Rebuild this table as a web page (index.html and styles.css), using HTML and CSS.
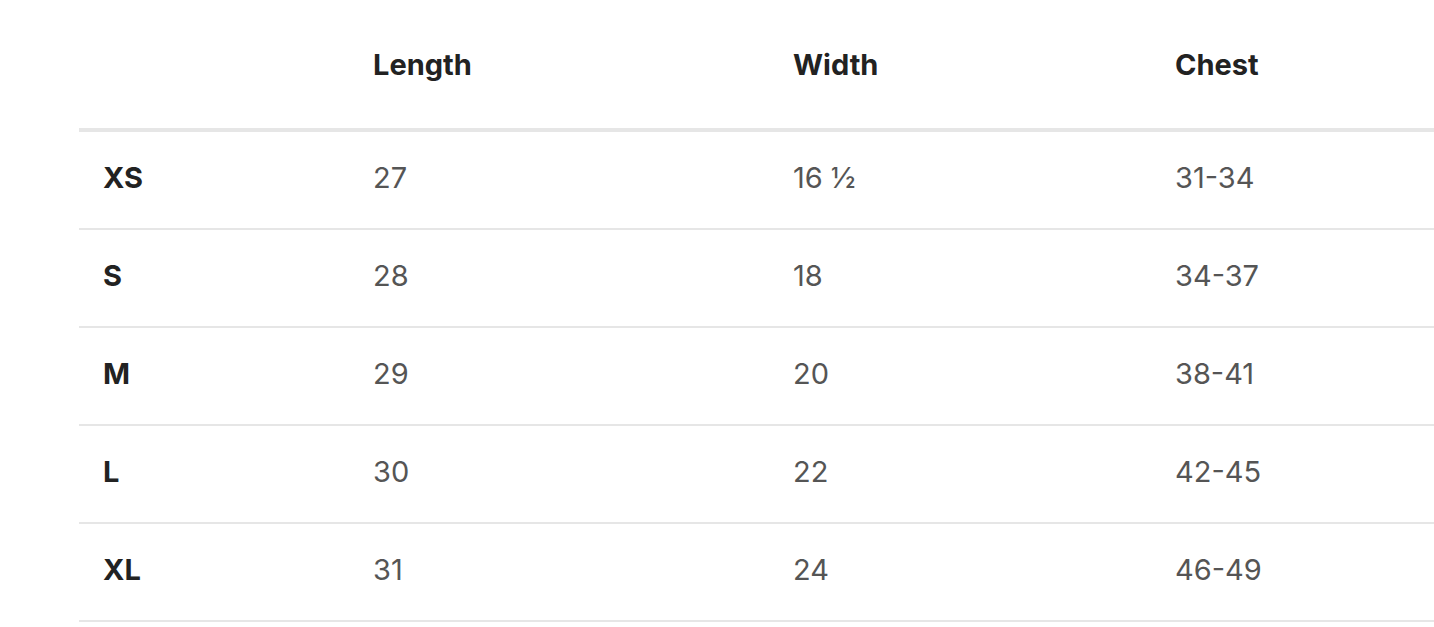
FILE: index.html
```html
<!DOCTYPE html>
<html>
<head>
<meta charset="utf-8">
<link rel="stylesheet" href="styles.css">
</head>
<body>
<div class="wrap">
<table class="sizes">
  <colgroup>
    <col class="c1"><col class="c2"><col class="c3"><col class="c4">
  </colgroup>
  <thead>
    <tr><th></th><th>Length</th><th>Width</th><th>Chest</th></tr>
  </thead>
  <tbody>
    <tr><th>XS</th><td>27</td><td>16 ½</td><td>31-34</td></tr>
    <tr><th>S</th><td>28</td><td>18</td><td>34-37</td></tr>
    <tr><th>M</th><td>29</td><td>20</td><td>38-41</td></tr>
    <tr><th>L</th><td>30</td><td>22</td><td>42-45</td></tr>
    <tr><th>XL</th><td>31</td><td>24</td><td>46-49</td></tr>
  </tbody>
</table>
</div>
</body>
</html>
```
FILE: styles.css
```css
html, body {
  margin: 0;
  padding: 0;
  background: #fff;
}
body {
  font-family: Inter, Lato, sans-serif;
}
.wrap {
  padding-left: 79px;
}
.sizes {
  width: 100%;
  border-collapse: collapse;
  table-layout: fixed;
  font-size: 29px;
}
.c1 { width: 270px; }
.c2 { width: 420px; }
.c3 { width: 382px; }
.sizes th, .sizes td {
  text-align: left;
  padding: 0 24px;
  vertical-align: middle;
  line-height: 1;
}
.sizes thead th {
  height: 128px;
  font-weight: 700;
  color: #222;
  border-bottom: 4px solid #e6e6e6;
  padding-bottom: 0;
}
.sizes tbody th {
  font-weight: 700;
  color: #222;
}
.sizes tbody td {
  color: #555;
  font-weight: 400;
}
.sizes tbody th, .sizes tbody td {
  height: 91px;
  padding-bottom: 5px;
  border-bottom: 2px solid #e6e6e6;
}
```
